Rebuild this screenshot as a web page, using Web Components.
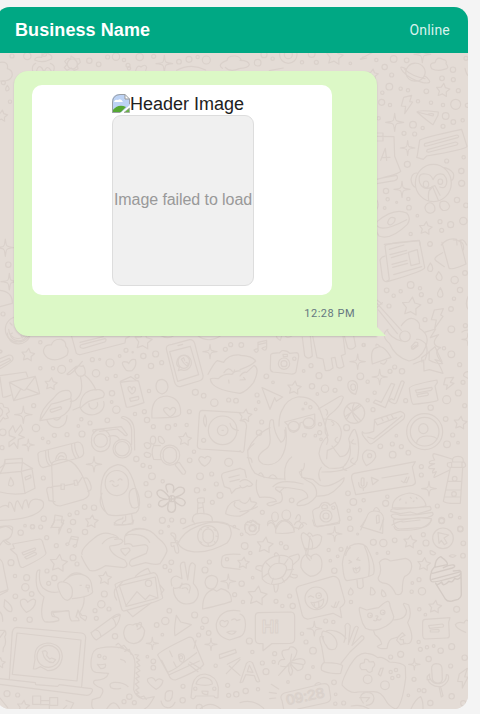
<!DOCTYPE html>
<html lang="en">
<head>
<meta charset="utf-8">
<title>Business chat preview</title>
<style>
html,body{margin:0;height:100%;overflow:hidden;background:#f4f4f4}
body{font-family:"Liberation Sans",Arial,sans-serif}
</style>
</head>
<body>
<chat-preview>
  <chat-header slot="header" name="Business Name" status="Online"></chat-header>
  <message-bubble time="12:28 PM">
    <media-header label="Header Image"><failed-image>Image failed to load</failed-image></media-header>
  </message-bubble>
</chat-preview>
<script>
const define = (tag, html, setup) => customElements.define(tag, class extends HTMLElement {
  constructor() {
    super();
    this.attachShadow({mode: 'open'}).innerHTML = html;
  }
  connectedCallback() { if (setup) setup(this, this.shadowRoot); }
});

define('chat-header', `<style>
:host{display:flex;box-sizing:border-box;height:46px;padding:0 18px 0 19px;align-items:center;justify-content:space-between;background:#00a884;color:#fff}
b{font-size:18px;line-height:22px;letter-spacing:.08px}
span{font:14px/20px Roboto,sans-serif;letter-spacing:.2px;color:#d9f2ed}
</style><b></b><span></span>`, (el, root) => {
  root.querySelector('b').textContent = el.getAttribute('name');
  root.querySelector('span').textContent = el.getAttribute('status');
});

define('failed-image', `<style>
:host{display:flex;box-sizing:border-box;width:142px;height:171px;padding-bottom:2px;align-items:center;justify-content:center;border:1px solid #ddd;border-radius:9px;background:#f0f0f0;color:#999;font-size:16px;line-height:18px;letter-spacing:-.08px;white-space:nowrap}
</style><slot></slot>`);

define('media-header', `<style>
:host{display:flex;box-sizing:border-box;width:300px;height:210px;padding:9px 0 0 2px;flex-direction:column;align-items:center;border-radius:10px;background:#fff}
.alt{display:flex;width:142px;height:21px;color:#212121;font-size:18px;line-height:21px;white-space:nowrap}
svg{flex:none;width:18px;height:19px}
</style><div class="alt"><svg viewBox="0 0 18 19"><defs><clipPath id="c"><path d="M8 0H13L18 5V11L9 18.500H0V8Q0 0 8 0Z"/></clipPath></defs>
<g clip-path="url(#c)"><rect width="18" height="19" fill="#bdd3f5"/><path d="M2 8Q3 5 6 6Q9 4 11 8Z" fill="#fff"/><path d="M0 17Q6 9 14 13L8 19H0Z" fill="#56a834"/><path d="M13 0V5H18" fill="#fff" stroke="#999"/></g>
<path d="M.5 18V8Q1 1 8 .5H13L17.500 5V10M.5 18.500H8" fill="none" stroke="#9b9fa4"/><path d="M12 18.500H17.500V14Z" fill="#67b346" stroke="#a4a6a5" stroke-width=".8"/></svg><span></span></div><slot></slot>`,
(el, root) => { root.querySelector('span').textContent = el.getAttribute('label'); });

define('message-bubble', `<style>
:host{display:flex;position:relative;box-sizing:border-box;width:363px;height:265px;padding:14px 22px 0 18px;flex-direction:column;border-radius:14px 14px 0 14px;background:#dcf8c6;box-shadow:0 1px 2px rgba(0,0,0,.14)}
:host::after{content:"";position:absolute;right:-9px;bottom:0;width:9px;height:9px;background:#dcf8c6;clip-path:polygon(0 0,100% 100%,0 100%)}
time{align-self:flex-end;margin-top:11px;font:11px/15px Roboto,sans-serif;letter-spacing:.5px;color:#667781}
</style><slot></slot><time></time>`, (el, root) => { root.querySelector('time').textContent = el.getAttribute('time'); });

/* Doodle tiles: each has an origin and is drawn at three units per pixel.
   dots: x y r; stars and sparks: x y size */
const tiles = [
{at:[0,0],
 dots:'82 168 11 133 162 7 268 182 8 296 193 7 323 171 6 348 170 11 372 180 5 384 196 6 419 171 11 387 205 5 461 169 6 537 185 7 567 178 9 593 171 5 619 180 12 36 168 6 10 248 6 30 305 5',
 stars:'5 348 18', sparks:'493 191 25',
 paths:`M0 187Q27 184 22 206Q40 211 36 229Q29 246 0 243M22 256Q34 270 20 273Q13 269 22 256M104 180Q105 169 125 172Q126 160 140 160M104 180Q128 191 154 177Q160 167 143 160M107 190Q94 197 98 213M151 190Q167 195 161 213M110 212Q114 194 125 203L130 212M134 212Q142 193 153 212M213 168L226 177L238 176L241 187L232 195L234 207L222 211L214 204L201 211L193 203L201 193L194 184L203 175L212 178ZM202 192A15 15 0 1 0 232 192A15 15 0 1 0 202 192M407 212Q412 193 423 201Q436 190 440 202L437 212M530 211Q573 188 617 210M667 205Q650 193 681 181Q682 167 706 168Q720 170 724 181M676 202Q690 218 718 206`},
{at:[240,0],
 dots:'53 188 10 98 176 5 145 164 26 145 164 12 186 187 5 229 187 6 331 190 4 215 162 10 72 164 9',
 stars:'284 170 26',
 paths:`M0 181Q26 181 28 194Q25 204 0 205M88 212L130 204M361 177L398 157M369 171L362 178L380 174`},
{at:[360,45],
 dots:'49 45 5 101 42 10 140 46 7 74 66 8 95 90 6 88 125 10 67 143 5 122 131 5 144 136 5 199 139 7 246 100 7 279 74 8 280 104 6 295 137 6 318 40 6 65 172 9 90 180 5 174 169 5 213 173 5 249 180 5 287 178 15 257 213 10 280 231 7 308 226 5 322 181 6 159 239 10 188 249 5 249 244 6 132 265 6 164 267 6 142 358 9 260 348 6 311 337 5 304 378 8 305 415 9 78 438 8 83 463 5 145 462 5 147 488 7 110 472 3 74 489 4 291 465 8 318 481 7 172 512 4 240 530 6 272 539 9 310 528 11 245 556 6 152 567 5 56 220 5',
 stars:'249 136 21 197 550 20 37 90 18', sparks:'187 28 25 104 232 27 143 309 22 126 433 24',
 paths:`M138 87A29 27 0 1 1 194 90A29 27 0 0 1 138 87M139 72Q112 58 129 80Q150 104 189 113Q215 117 207 105Q201 96 193 92M134 73Q155 93 195 101M215 71Q205 54 225 53Q230 32 248 43Q262 45 258 56Q271 71 252 73Q233 80 215 71M131 157L155 151L149 170L158 171L134 206L137 184L124 183ZM171 201Q174 193 235 201L234 211L219 239Q203 229 171 201L219 213Q226 203 205 207M172 331L179 286Q182 279 305 253L321 304Q319 313 200 333L190 343L170 337ZM194 296L291 270Q300 273 293 278L201 303Q190 305 194 296M202 314L287 291Q298 294 290 300L208 321Q196 322 202 314M166 414A54 56 0 1 1 274 414A54 56 0 1 1 166 414M171 384Q156 383 153 403Q155 423 167 427M249 367Q270 370 280 385Q284 401 273 408M214 427Q190 437 179 413Q172 384 195 387Q213 386 219 404Q230 381 251 389Q264 402 259 418Q255 432 239 426M190 418A8 10 0 1 1 206 418A8 10 0 1 1 190 418M234 410A7 8 0 1 1 248 410A7 8 0 1 1 234 410M206 467Q201 425 225 422L240 451M207 438L218 425L235 466M195 486A15 18 0 1 1 224 497A16 18 0 0 1 195 486M241 471Q261 462 269 483Q266 499 248 496Q235 487 241 471M51 530Q102 487 140 504Q155 519 142 538Q92 587 57 573Q45 560 51 530M51 542Q66 563 140 524M83 532Q89 510 105 520Q107 533 91 540Q83 539 83 532M51 274L102 275L104 334L122 379Q119 386 51 403M51 264H69V288H51M62 346L76 310L80 346M66 338L90 337M51 402L110 391Q117 402 104 407L51 416M51 466Q58 480 51 492M315 70Q320 94 329 93M73 598L178 587Q181 594 179 600M244 600Q263 577 290 583L291 600M297 590Q309 575 320 600`},
{at:[240,240],
 dots:'570 12 7 440 151 7 461 167 5 482 154 5 512 135 10 540 145 5 544 164 6 447 198 6 570 183 7 644 120 11 675 99 7 660 150 8 642 176 5 633 207 7 555 239 6 634 268 10 676 257 6 634 343 10 612 325 5 4 315 7 371 315 4',
 stars:'514 200 29', sparks:'684 298 18',
 paths:`M435 18Q438 9 538 1L554 82Q557 92 445 124Q430 128 427 112L420 60Q424 50 435 48M435 18L447 112Q450 122 440 123M448 28L492 15M450 44L500 31M454 53L501 39M456 73L501 61M458 82L503 70M461 104L545 80M505 37L532 29L539 70L513 77ZM606 7L627 84Q634 92 678 72L660 0M608 38Q576 54 588 62L613 80M640 0Q676 -1 670 30M571 69Q583 83 575 94Q560 96 564 81ZM596 95Q612 112 603 121Q590 124 588 109ZM601 143Q614 166 605 171Q591 174 593 158ZM583 210L610 206L602 225L609 229L584 265L589 240L574 239ZM411 190L484 271M415 210L472 281M411 180L426 192M408 205L427 188M479 289A16 16 0 1 0 511 289A16 16 0 1 0 479 289M484 257Q509 222 532 243Q541 251 538 265Q572 285 557 321Q544 356 507 363Q464 349 449 311Q419 285 444 268M514 319L526 306Q536 306 533 314L520 327Q513 329 514 319M553 277L587 267L571 293L596 284Q567 315 602 323Q576 333 608 371Q588 372 567 360L568 336L545 353L546 366M684 170Q674 193 684 207M0 1H1`},
{at:[0,240],dots:'25 74 8 9 222 6 2 334 4',sparks:'16 23 26 28 125 25',
 paths:`M0 151Q38 155 37 190L0 200M16 268A37 37 0 1 0 92 268A37 37 0 1 0 16 268M26 268A28 28 0 1 0 82 268M53 270L44 252M53 270L75 275M30 249L36 255M31 283L37 279M67 294L63 287`},
{at:[0,330],
 dots:'121 37 5 1 65 4 121 115 5 159 115 5 185 118 12 212 92 4 277 89 6 299 88 3 330 99 12 288 130 11 378 61 6 359 78 4 398 67 2 430 78 8 467 72 9 453 108 8 485 98 6 321 146 5 347 138 5 411 139 6 336 190 8 335 216 4 349 239 11 447 183 5 433 245 6 405 252 5 441 270 8 460 290 6 504 292 8 526 285 4 560 285 5 568 245 6 586 187 9 611 197 7 643 218 11 686 210 6 708 212 7 676 58 6 692 44 6 101 227 6 108 294 11 8 307 10 6 353 6 128 325 4 145 337 5 163 316 6 201 314 6 235 288 4 244 268 5 270 279 6 246 312 9 322 271 7 130 444 6 409 387 8 429 406 6 450 411 5 456 439 10 438 461 6 445 493 10 448 527 5 488 454 5 569 391 7 582 365 5 600 439 10 635 432 6 686 397 12 649 462 6 591 481 8 614 479 3 660 496 9 637 517 6 131 566 8 209 554 5 231 548 6 254 531 7 282 533 8 433 566 5 487 571 9 515 570 6 549 573 8 75 587 4 97 590 6 122 591 6 506 589 3',
 stars:'84 75 20 153 162 19 430 33 27 555 328 20 275 575 20', sparks:'630 65 21 70 254 26 85 345 18 282 403 23',
 paths:`M22 9A34 31 0 0 0 90 12M30 12A26 24 0 0 0 81 14M0 86L27 75Q40 75 39 88Q37 96 0 116M0 97L28 85L32 91L0 108M142 83Q125 68 133 54Q137 43 154 45Q160 26 184 28Q199 34 197 48Q209 58 201 76Q168 99 142 83M215 19L229 70Q235 76 248 72L375 39L377 25L388 20M240 37L310 20M242 45Q236 54 250 55L314 36Q322 29 315 26L245 44M478 14Q504 31 523 16M591 15Q625 43 664 16M379 121Q359 96 373 95Q384 95 386 101Q393 84 406 89Q412 107 396 122Q388 124 379 121M361 154L393 140L407 150L416 153M361 157L379 231Q382 235 432 218L416 154Q413 150 361 157M384 172Q391 165 396 179Q398 165 406 174Q409 185 396 192Q383 183 384 172M389 205L415 199Q419 209 412 210L392 214ZM468 168Q469 148 486 148Q503 151 504 171Q502 188 486 192Q468 187 468 168M456 264Q451 199 501 198Q543 204 542 250Q542 259 517 262Q479 264 456 264M510 261Q486 242 492 235Q505 229 510 240Q520 225 527 238Q528 250 510 261M500 61Q495 45 516 43L569 29Q579 28 584 40L609 136Q611 149 597 153L543 169Q528 173 523 154ZM509 65L571 49L596 134L533 154ZM534 47L548 43M530 98A22 23 0 1 1 543 119L535 122L538 112Q530 108 530 98M535 98A16 17 0 1 0 568 97A17 17 0 1 0 535 98M544 88Q550 101 561 108L566 101L558 97M544 88L551 83L554 92M624 133Q645 94 652 92L671 97Q686 72 720 75M631 147Q635 143 655 146Q671 130 695 133Q706 120 720 123M631 147Q633 179 720 190M672 128Q685 107 697 124M686 150L687 159M698 132L704 120M0 137L78 126L83 140M28 157L106 139L119 191L41 212ZM30 158L69 180Q76 183 80 174L106 140M41 212L63 176M117 191L79 176M0 142L8 200Q9 205 33 195M120 272Q120 239 161 204Q180 176 207 182Q217 188 212 204M120 272L179 262Q220 242 213 205Q178 217 154 222L120 272M151 239L182 230Q187 234 183 237L155 247Q149 245 151 239M140 269Q151 297 179 292Q200 286 201 257M160 265Q171 277 182 262M228 109L201 132Q208 140 230 114L247 94M228 110Q219 119 233 136Q244 144 255 132Q258 118 249 106M224 113Q232 105 247 109M241 138Q252 184 234 202Q223 216 211 214M253 134Q277 153 288 181M219 240L240 231Q243 174 299 179Q320 187 309 202L273 212Q261 214 241 235M240 231A36 31 0 0 0 311 215M267 221A13 14 0 1 0 292 218M0 220Q10 218 11 231L24 234L28 245L19 252L25 264L15 267L10 262L0 276M0 233Q16 245 0 260M27 304L39 287L46 307L62 285L68 300L56 315L73 322L55 328L53 355L42 338L27 350L27 337L46 323L28 317ZM275 331A28 28 0 1 1 330 332A28 28 0 1 1 275 331M282 331A20 20 0 1 1 322 332A20 20 0 1 1 282 331M339 356A28 28 0 1 1 395 356A28 28 0 1 1 339 356M345 356A21 21 0 1 1 388 356A21 21 0 1 1 345 356M326 319Q352 311 359 330M282 309Q273 298 285 299L364 290L382 314Q378 322 369 310L352 297L299 304M364 264Q366 256 379 262Q401 271 403 300L404 360M366 264Q394 275 395 300V343M114 376Q111 366 129 363L234 336Q250 337 251 370Q248 382 234 384L129 413Q115 411 114 376M137 362Q136 398 150 407M145 360Q144 395 158 404M215 342Q214 365 228 386M224 339Q223 362 237 383M155 408Q151 397 171 391Q211 378 236 418Q251 438 267 489Q269 499 251 508L180 528Q164 526 160 518ZM167 388Q172 364 193 369Q202 379 198 386M174 386Q180 372 192 381M156 470L185 467M194 467L224 461M234 460L246 443M183 462H193V478H183ZM222 452L230 450L234 465L224 466ZM155 473Q135 467 142 489L147 512L165 515M253 445Q265 438 273 468Q276 482 264 484M0 413L12 404L15 389L67 385V398L16 401M15 388V401L0 431M67 397L96 415L105 475L75 490L64 424L0 430M67 399L64 424L98 415M0 486Q35 496 76 490M32 442Q24 463 26 466Q37 472 41 462Q40 453 32 442M75 442L92 435L93 443L77 450ZM0 532Q19 520 26 532Q24 509 34 520L44 544Q46 510 54 513L67 537Q70 507 80 510L86 533Q88 503 114 508Q136 510 129 532Q107 569 0 571M303 495Q299 415 353 404Q400 402 416 527Q419 540 408 548Q351 562 325 554Q312 548 303 495M316 456A34 34 0 1 1 385 456A35 35 0 1 1 316 456M330 455Q336 448 342 456M354 451Q360 443 366 450M337 463Q345 475 355 465M306 490Q292 520 314 543M388 490Q391 474 407 475Q421 499 418 527Q407 538 396 532Q385 514 388 490M343 584Q341 572 368 566L369 561M368 583Q364 577 377 571V558M395 551L398 577Q392 586 343 585M451 330A8 12 0 1 1 467 331A8 12 0 1 1 451 330M476 320Q485 316 494 335Q490 346 479 337Q473 329 476 320M433 341Q442 333 453 344Q451 357 441 356Q431 350 433 341M433 371Q439 363 453 373Q452 384 440 382Q431 378 433 371M481 376A29 30 0 1 1 539 375A29 30 0 1 1 481 376M490 376A20 20 0 1 1 529 375A20 20 0 1 1 490 376M481 347L461 346Q452 367 461 388L484 389M526 406Q526 398 538 397L557 425Q556 435 547 432ZM720 248L607 241Q599 242 598 250L592 347Q592 356 603 357L720 365M625 301A43 43 0 0 1 711 301A43 43 0 1 1 625 301M652 301A16 16 0 1 1 684 301A16 16 0 1 1 652 301M615 255Q623 271 617 290Q605 274 615 255M605 331A6 6 0 1 0 617 331A6 6 0 1 0 605 331M666 301H670M690 280Q693 298 715 301M596 389Q600 373 615 385Q621 374 633 384Q631 400 614 409Q601 402 596 389M720 415L670 429Q662 433 666 445L673 470L690 476L695 490L707 477L720 473M687 443L718 435M690 455L718 448M592 509Q591 502 613 504V517Q602 521 593 517ZM594 518L592 550M608 518L612 550M594 535L609 531M577 575Q575 550 599 550Q639 549 637 572M549 596Q631 552 718 599M720 510Q683 511 677 551Q691 559 720 558M705 517Q696 530 720 538M0 590Q23 584 35 600M165 555L187 559L184 578L191 580L176 600M153 593L162 577L165 555M397 599Q420 591 441 600`,
 bold:`M503 486Q490 461 509 462Q526 462 519 487Q534 465 550 474Q564 490 523 503Q554 503 556 518Q550 539 524 514Q532 545 515 547Q496 546 507 515Q486 539 476 525Q473 508 502 508Q469 504 471 486Q482 468 507 501M507 506A9 9 0 1 0 525 506A9 9 0 1 0 507 506M514 498V515M506 507H524`},
{at:[240,330],
 dots:'213 107 6 191 123 4 237 137 9 299 146 6 216 169 8 232 192 4 255 176 11 285 181 6 79 139 7 99 157 4 51 195 6 56 216 4 47 238 4 65 276 6 57 308 8 371 45 5 361 139 10 383 155 5 383 211 5 404 188 5 399 239 6 320 293 9 464 111 6 450 124 6 486 124 8 497 212 6 572 233 8 617 267 7 620 209 12 655 189 9 674 227 6 669 157 6 659 104 6 638 315 6 621 343 10 654 338 4 457 342 6 484 350 6 469 317 4 421 349 7 458 374 10 505 368 7 544 410 6 544 435 6 592 528 6 605 571 9 632 557 6 659 563 4 437 520 9 442 500 5 324 490 7 340 516 10 371 511 5 326 542 5 360 541 5 329 565 6 155 511 7 67 547 6 197 220 4 211 232 5 189 237 3 240 283 5 239 308 6 226 317 4 243 328 4 661 596 8',
 stars:'163 174 21 16 257 20 661 279 20', sparks:'353 95 23 419 141 23 567 476 22',
 paths:`M54 58V37L80 31V52M54 44L80 38M42 60Q55 53 55 61Q50 74 42 60M66 55Q79 46 80 54Q76 67 66 55M109 18Q110 26 121 31L125 18M136 18Q142 26 155 18M92 76Q91 68 118 69L126 62Q142 60 149 70L170 68Q176 69 176 80L168 125Q166 133 153 132L99 126Q90 124 91 113ZM115 101A17 17 0 1 0 149 101A17 17 0 1 0 115 101M123 101A9 9 0 1 0 141 101A9 9 0 1 0 123 101M129 73H142V80H130ZM158 86A5 5 0 1 0 168 86A5 5 0 1 0 158 86M187 22L194 77Q203 91 217 78L211 18M218 18L231 83L249 87L256 121Q267 125 279 114L274 84L285 82L291 111Q300 119 312 109L304 77L316 72L309 18M313 18L323 54Q336 63 347 49L341 18M0 76Q37 77 47 93Q35 107 0 119M0 138Q10 124 20 127L42 106Q61 115 41 157Q20 185 0 190M0 150L16 149L11 142M397 102Q389 56 410 53Q429 41 453 82ZM408 48Q407 36 420 49M422 99Q434 108 440 91M441 0Q451 24 484 33M66 173L128 201L109 214L104 203L90 238ZM347 193Q329 190 324 171Q321 151 339 152Q355 156 352 176ZM333 172A7 7 0 1 0 346 171A7 7 0 1 0 333 172M400 218L406 210L424 217L454 160L464 163L436 233ZM447 213L453 206L462 210L483 155Q487 149 493 157L470 217Q466 226 447 213M508 175Q509 165 591 150L592 158L585 168L594 210Q592 216 520 223Q514 222 508 175M526 181L575 172Q579 177 573 181L530 189ZM531 194L562 188Q568 192 563 196L534 201ZM616 144L641 142L631 157L642 160L619 178L622 165L611 164ZM555 90Q567 61 556 40Q541 26 530 28M526 46Q507 57 521 57L534 47M520 102L551 90L552 123L568 119L609 130Q597 97 585 89L606 95L585 50L567 65M684 125Q669 127 671 138L684 145M684 0Q673 0 666 6M312 249A31 31 0 1 1 374 249A31 31 0 1 1 312 249M320 228L363 273M317 259L363 227M343 218Q327 252 355 277M359 223Q336 239 319 269M367 305Q372 315 401 304L404 269L481 244Q500 249 491 267L400 338Q390 347 382 333Q363 313 367 305M383 321L401 327L486 258M403 270L412 285L470 263M424 263L429 272M440 259L445 268M454 255L459 263M379 407Q355 374 381 360Q409 359 407 381Q399 398 379 407M383 377A6 6 0 1 0 395 377A6 6 0 1 0 383 377M500 305A54 54 0 1 1 608 305A54 54 0 1 1 500 305M511 305A43 43 0 1 1 597 305A43 43 0 1 1 511 305M536 296A14 15 0 1 0 564 296A14 15 0 1 0 536 296M530 338Q535 317 562 318Q588 319 591 328M335 447Q333 432 343 430L526 395L517 411L526 454Q528 462 517 466L347 494ZM364 449Q363 441 372 445V466Q361 475 364 449M356 458Q356 475 370 474Q382 469 381 456M370 475V481M394 442L415 451L398 464ZM426 444L504 431M484 453L492 458L500 442M494 456L500 458L507 441M636 387Q605 377 582 371Q574 374 584 390Q562 393 570 401H584Q559 410 569 416H584Q576 422 578 429L589 425Q578 445 584 442L628 421M638 395Q635 379 654 379Q673 379 669 397M638 396L623 399Q619 410 630 412H672Q682 407 672 396ZM635 399V412M666 398V412M631 413L610 514Q619 522 661 520L668 413M624 454H666M618 480H663M613 501H662M637 446A7 7 0 1 0 651 446A7 7 0 1 0 637 446M635 492A7 7 0 1 0 649 492A7 7 0 1 0 635 492M117 288Q117 254 127 239Q140 208 172 201Q220 198 239 238Q250 266 264 317Q240 338 237 371Q243 404 266 414Q314 420 320 398Q339 372 326 326Q342 287 347 303Q362 340 352 389Q332 427 246 426M137 293Q145 350 123 384Q102 411 69 402Q37 383 79 356Q95 346 89 310Q85 260 100 271Q102 312 123 337Q140 328 134 300M90 293Q44 314 23 361Q23 404 45 430Q72 448 133 447M134 276L224 252L225 285Q216 301 195 293L188 276L180 279Q182 302 161 307Q145 306 143 285ZM145 290A16 14 0 1 1 177 287A16 14 0 1 1 145 290M190 278A16 14 0 1 1 222 277A16 14 0 1 1 190 278M188 320Q185 307 200 312L195 321ZM235 237L296 201Q309 194 310 203Q301 232 268 255Q253 269 256 309Q269 326 260 343M250 267Q299 266 304 306Q304 348 262 361L260 386M276 348Q290 368 300 380Q330 379 330 335M135 450Q129 399 155 381M193 400Q195 420 178 426Q181 444 215 459Q235 477 228 500Q206 529 174 527Q161 520 203 503Q205 489 186 480Q143 471 110 471Q99 478 123 487Q135 518 111 520Q91 531 85 526Q70 519 109 514Q107 499 59 502Q45 482 50 450M184 418L185 442L218 448L238 465Q265 477 312 443Q315 455 290 476Q270 500 229 498M99 470Q121 444 189 462M244 412Q230 428 241 452M42 341Q31 348 25 360M22 383Q36 381 36 397M56 434Q64 420 72 443M87 442Q99 425 111 445M118 487Q136 468 137 474M257 238Q267 246 260 255M275 274Q288 284 277 286M292 322Q277 330 294 339M316 402Q301 421 320 421M339 384Q322 395 345 403M340 329Q327 342 347 342M0 271L13 274Q23 281 18 301L12 361Q8 373 0 362M0 415L14 420L19 442M0 455Q17 440 38 463Q31 473 22 467Q3 480 0 467M0 514Q20 530 30 503L33 515Q57 517 47 523Q32 544 0 558M0 545Q28 544 52 530M218 546Q216 538 237 532L245 520Q262 512 270 526L285 517L291 530L300 572Q301 578 231 591Q224 589 218 546M240 558A18 18 0 1 0 276 558A18 18 0 1 0 240 558M249 558A9 9 0 1 0 267 558A9 9 0 1 0 249 558M245 531Q248 521 261 526L263 534L247 537ZM275 533A5 5 0 1 0 285 533A5 5 0 1 0 275 533M22 574L33 579L38 570L49 581L59 583L56 597M14 598L15 583L25 585M28 595A9 9 0 1 1 46 595A9 9 0 1 1 28 595M95 560A10 14 0 1 1 115 560A10 14 0 1 1 95 560M126 555A13 15 0 1 1 152 555A13 15 0 1 1 126 555M167 567Q174 546 181 559Q183 572 174 575M83 583Q98 568 107 596M108 597Q130 548 163 597M176 599Q184 568 200 583M362 600L380 562Q384 544 403 543Q429 542 431 567L420 600M401 541Q408 523 419 543M409 562Q409 554 417 556L418 577L410 580ZM457 533Q457 498 508 489Q551 494 558 526Q551 535 457 533M452 544Q452 533 472 538L570 529Q578 540 566 542L531 552L511 546L481 551ZM454 556Q460 548 481 556L532 554L577 547Q585 557 563 562L475 568Q453 566 454 556M460 570Q477 564 487 570L535 563L574 566Q573 588 546 593L479 597Q462 596 460 570M479 510L482 507M498 516V520M511 502L514 505M520 515L522 513M529 503L531 506`},
{at:[0,520],
 dots:'62 38 8 140 53 6 169 77 6 208 32 6 255 36 8 219 6 8 98 20 6 33 128 9 141 153 6 163 174 8 146 190 6 45 168 5 80 173 9 76 202 11 46 229 7 95 222 7 45 298 5 89 299 8 219 113 9 231 132 6 313 222 9 304 253 11 285 272 6 327 267 6 289 295 6 345 349 8 470 315 7 496 303 11 508 272 7 487 344 4 584 285 9 615 301 10 607 323 5 626 339 7 596 345 6 495 140 6 514 127 7 510 152 5 628 126 6 615 150 9 704 224 6 483 36 6 703 20 4 442 410 4 460 424 7 460 443 7 388 530 8 403 548 6 372 545 6 549 499 6 548 541 8 647 437 5 683 496 6 686 526 6 709 523 8 598 562 9 21 521 9 53 525 6',
 stars:'176 130 27 315 175 20 0 429 16 70 560 19', sparks:'457 370 18 633 373 18 685 184 22',
 paths:`M0 24Q31 12 38 22Q39 58 14 60Q6 64 0 75M15 60L32 72Q23 79 10 61M171 0H192L176 42L178 22H154L165 0M343 8Q347 17 398 12L401 0M31 88L43 85L38 72L119 57Q127 58 129 70L138 99Q139 109 70 142Q61 145 58 132L50 104ZM66 98L104 84Q109 86 105 91L70 105ZM74 112L104 97Q114 101 107 104L80 117ZM206 71L214 49L235 52L229 76M211 56L234 60M197 72Q205 65 207 73Q200 81 197 72M219 78Q227 70 230 78Q224 86 219 78M246 103Q240 88 283 54Q307 33 333 42Q350 46 355 54L341 51Q320 54 307 71M344 58Q365 53 369 64Q363 76 330 78Q326 84 338 99Q348 111 374 120Q389 139 371 143L316 137Q285 157 269 151Q257 137 244 108M374 64Q370 41 394 32Q444 14 473 53Q501 74 501 93Q496 108 480 131Q467 136 437 128L395 139Q382 132 394 119L439 100Q450 76 435 74L398 79Q392 66 374 73ZM378 47Q383 41 410 44Q436 46 449 67M376 107Q350 83 374 86Q390 80 390 92ZM521 50Q509 44 514 39Q532 37 526 61Q543 65 530 69Q539 90 535 98Q525 105 522 77Q512 85 513 68L528 68ZM534 71Q549 35 592 19Q647 -3 684 12Q705 40 681 69Q621 103 573 94Q546 90 534 71M593 48A31 31 0 1 1 655 48A31 31 0 1 1 593 48M609 48A16 17 0 1 1 640 48A16 17 0 1 1 609 48M599 27L604 29M621 22L626 22M642 28L646 32M647 48L652 49M643 65L647 69M624 72L625 76M601 65L605 68M578 0L584 12M720 103Q666 99 666 114Q661 138 671 142L720 148M676 118A5 5 0 1 0 686 118A5 5 0 1 0 676 118M0 118Q9 124 11 145L24 209L0 217M0 225L23 213M14 239Q43 260 34 275Q22 276 12 260ZM79 277Q57 257 62 241Q77 232 83 247Q101 231 107 242Q106 266 79 277M0 276Q9 285 8 304M120 150Q114 189 129 204Q150 221 175 216M120 150Q108 148 109 172Q105 214 132 231Q117 289 134 305Q151 309 176 302Q180 291 157 289Q151 276 157 274L207 273Q208 297 215 303L237 302Q235 291 228 291L234 270M205 272L158 278L165 291M234 270L242 292L256 302Q267 284 246 287L239 277Q255 254 252 229M176 208Q167 183 189 186Q213 188 217 210Q219 238 202 241Q187 240 176 208M190 185Q213 158 245 163Q270 170 274 190L278 216Q272 230 217 236M204 171Q224 150 251 165M240 196H244M259 195L268 196L268 204L258 202ZM263 204L265 215M345 194Q346 187 461 158Q470 159 474 175L488 233Q490 241 376 272Q367 275 365 267ZM358 197L466 171L474 234L379 259ZM369 184L351 203M406 169Q421 153 444 145L451 159M345 207Q339 224 350 240M380 271L398 290L454 248M377 258L411 215L436 239L449 225L473 234M436 190A9 9 0 1 0 455 190A9 9 0 1 0 436 190M479 194L492 210L483 222M273 338L343 287Q356 279 361 285Q357 308 345 321L289 360Q278 354 273 338M287 330Q300 331 303 349M335 293Q345 299 347 315M341 293L360 285M371 340Q374 307 399 315Q421 302 434 332Q431 368 401 371Q374 369 371 340M410 312Q407 315 412 319M411 321Q416 302 424 309Q427 325 412 328M516 198Q507 170 530 168L546 176L541 138Q542 124 554 127L563 180L568 141Q575 119 586 136L580 190Q610 223 580 248Q545 261 527 232Q518 217 521 202M524 205Q545 205 546 189M540 205Q540 195 548 193Q570 188 571 203L567 219M546 205Q562 200 563 209M615 187Q616 168 635 166Q654 168 653 184Q649 207 633 207Q617 205 615 187M608 267Q607 218 640 208L650 214L663 206Q697 213 694 244Q679 251 608 267M529 286L542 306L574 314L525 347Q521 330 529 286M720 273Q662 263 649 311Q646 350 689 360L720 350M660 306Q665 297 674 305Q685 298 685 307Q680 321 671 321Q658 318 660 306M695 300Q706 292 710 302L720 299M681 337Q691 331 708 334Q698 350 681 337M0 352L15 332Q21 341 14 350Q21 371 10 384L9 395M0 331H13M36 347Q36 323 50 322L244 339Q257 341 257 353L245 499M36 347L28 478M51 339L243 360L231 483L37 463ZM0 476L106 488L107 494L173 499L178 494L268 505Q279 504 277 513Q272 526 260 526L0 493M107 447L100 447L105 418Q99 375 142 369Q184 371 187 409Q183 450 144 452L122 440ZM111 409A34 33 0 1 1 179 409A34 33 0 1 1 111 409M127 394Q134 429 160 428L167 419L155 414L149 417L140 407L142 398L136 392ZM348 375L355 370L370 384M355 384L372 376L386 393M374 394L388 388L393 403M274 417Q277 387 300 384Q350 375 382 391Q407 402 405 439L401 509Q407 532 429 537L463 530Q446 562 433 567M274 417Q269 455 288 457Q331 460 325 461Q320 480 285 481Q276 486 285 494Q292 501 304 504Q315 512 300 532L277 539Q272 559 280 567M293 408A5 5 0 1 0 303 408A5 5 0 1 0 293 408M309 413A5 5 0 1 0 319 413A5 5 0 1 0 309 413M292 433Q302 436 316 432Q320 446 302 446ZM362 418Q377 422 376 427M384 500Q371 486 342 487Q324 489 333 503Q344 509 362 505M405 404L416 405L409 414L419 421L410 426L420 437L409 442L420 452L408 459L418 470L407 475L417 486L406 492L417 504L407 510L417 519L408 521L421 532L431 528L439 538M320 567Q342 530 359 567M468 508Q437 486 443 477Q458 466 467 483Q476 471 489 482Q486 500 468 508M496 521Q500 509 517 513Q520 532 510 542Q498 546 495 537ZM483 543Q487 562 502 563Q517 565 525 547M473 405Q478 394 566 352Q574 349 579 356L611 433Q602 449 526 480Q512 480 506 464ZM485 421L503 457Q531 446 549 428L540 423Q534 410 536 404Q553 396 554 415L549 428L590 398M506 465L598 423M588 361L582 385M509 393L517 410M521 426L529 442M565 432L594 455M569 426L603 447M538 412A5 5 0 1 0 548 412A5 5 0 1 0 538 412M577 495Q585 462 615 462Q649 467 655 502L654 533Q645 536 642 528H587Q582 542 573 533ZM588 492Q592 474 612 472Q638 476 637 492Q618 500 588 492M581 506A5 5 0 1 0 591 506A5 5 0 1 0 581 506M638 506A5 5 0 1 0 648 506A5 5 0 1 0 638 506M606 513Q605 524 623 524L624 514ZM658 404L706 388L709 398L659 416ZM682 433L720 413M688 438L720 466M679 461L720 419M600 567Q631 540 662 567M98 528H122V553H98ZM124 542H147M149 533H173V556H149ZM122 554H148V566M0 534L23 563M198 541L221 549L212 567M190 567L200 557`},
{at:[240,520],
 dots:'14 78 10 31 99 5 5 43 4 123 70 5 138 82 7 38 173 4 5 191 8 9 246 5 108 244 6 127 258 5 149 228 6 158 258 8 186 341 5 28 363 9 37 396 5 104 401 6 67 429 6 101 426 5 78 455 9 144 486 4 204 471 8 219 441 4 198 366 6 219 392 10 257 303 6 280 306 5 282 487 7 17 513 8 54 508 5 266 90 5 303 88 6 271 122 4 283 152 8 293 109 4 333 246 5 331 26 8 353 42 3 400 67 9 430 69 11 464 61 7 411 100 3 444 98 5 550 44 6 558 69 9 661 28 8 670 70 7 669 107 7 539 97 6 537 179 6 517 189 4 515 215 5 546 214 11 538 268 5 650 268 9 556 284 4 536 366 5 541 388 6 561 382 5 581 378 4 602 392 8 635 380 9 674 413 8 566 417 8 632 438 6 452 411 6 482 403 9 452 456 5 468 450 5 475 468 5 457 474 5 522 478 6 537 511 5 552 512 6 505 526 4 571 549 8 635 529 8 670 550 8 287 523 4 286 551 5 311 549 6 605 3 8',
 stars:'75 76 25 52 228 30 510 66 20 552 133 20 585 261 20 10 129 18', sparks:'284 42 22 223 326 22 523 433 17',
 paths:`M14 22L17 10L31 2L46 4L58 16L57 31L46 43L29 45L17 36ZM27 24A11 11 0 1 0 49 24A11 11 0 1 0 27 24M83 17Q80 0 97 2L107 20M107 27Q111 0 136 0Q159 2 163 36Q134 43 107 39ZM163 14Q174 -7 190 17Q183 30 164 22M218 0L223 17Q226 22 298 10V0M362 20L367 14L376 0M362 20L428 40L429 0M456 15Q481 0 489 6L540 0M462 20Q466 35 485 30Q553 35 575 0M197 93Q174 40 191 38L202 45Q209 31 218 49Q235 38 245 50Q245 79 220 86Q202 90 193 83M202 86Q190 104 210 121M210 49Q206 77 203 103M204 47Q223 65 216 86M183 142Q180 114 198 103Q214 107 214 116Q211 104 229 102Q253 112 243 151Q232 168 211 169Q192 162 183 142M66 147Q68 122 103 109Q141 99 157 122Q164 168 125 189Q86 202 67 177ZM85 154Q94 127 121 130Q143 132 139 150Q133 175 110 177Q87 180 85 154M105 110L103 103Q110 90 119 112M149 110L174 102Q183 110 174 121L157 136M64 154L48 147Q45 135 62 137L69 139M157 163L171 165Q175 174 161 174L149 169M101 193L104 214Q110 222 114 205L115 192M79 129L92 142M118 109L117 129M144 117L132 134M139 150L160 148M126 174L133 186M100 175L95 190M85 160L69 171M308 138Q304 124 322 79Q323 93 330 78Q361 63 380 81Q408 132 401 161Q398 171 321 182Q311 181 308 138M317 106Q320 90 331 83M374 80Q393 122 386 168M327 121L335 126L327 130M355 113L350 119L360 121M339 144Q350 150 359 141Q363 154 349 159Q341 159 339 144M347 143L349 153M351 180L353 202Q362 211 370 199L368 175M332 204Q317 225 334 225Q346 218 332 204M392 202Q399 202 406 217Q402 228 391 224ZM426 209Q438 218 438 227Q427 235 424 221ZM418 127Q432 109 451 123Q477 118 497 115Q519 121 514 147Q509 164 494 169Q487 179 487 213Q483 228 467 222Q456 197 440 191Q411 187 415 172Q427 155 418 127M169 213Q166 202 178 198L278 169Q291 168 297 180L314 242Q316 253 300 263L305 293L279 280L205 297Q192 298 187 286ZM195 235A34 34 0 1 1 263 235A34 34 0 1 1 195 235M205 231L212 227L221 232M228 228A8 8 0 1 0 244 226A8 8 0 1 0 228 228M236 227H239M213 247Q229 250 251 237Q252 259 231 265Q222 265 213 247M222 249L224 257M236 245L237 263M274 258L281 263L288 246M282 262L289 262L297 244M46 287Q47 278 56 278L153 276Q164 277 164 290V356Q164 369 150 370L95 371L69 392V371H58Q46 370 46 356ZM0 282Q19 288 16 321Q14 344 0 350M578 55A31 31 0 1 1 640 55A31 31 0 1 1 578 55M594 38L626 45L612 54L621 69L613 74L604 61L597 70ZM570 93Q572 89 587 100Q583 109 571 101ZM628 108Q636 101 648 107Q639 116 628 108M253 367Q239 340 250 333Q275 337 287 357Q296 377 285 387Q265 393 260 378Q247 362 250 350Q232 342 245 379L253 427Q240 437 245 451Q265 463 302 460L308 437Q301 429 253 428M259 333Q266 328 289 334Q308 341 318 355M312 367Q319 352 315 317Q322 302 331 318L325 373L343 324Q350 314 355 323L336 376L365 347Q374 349 371 357L330 396L303 430M368 310Q353 263 360 262L380 270Q400 266 416 263Q437 243 443 244Q449 243 450 258L461 289Q462 303 439 318Q402 339 377 325ZM383 286A7 7 0 1 0 397 286A7 7 0 1 0 383 286M421 277A7 7 0 1 0 435 277A7 7 0 1 0 421 277M407 288Q416 286 413 292L410 295L410 301M401 301Q408 305 412 298Q418 303 423 297M391 287H393M429 278H431M401 333L405 344Q422 355 425 372L412 379Q416 389 441 385L444 372Q448 360 454 357L474 351M461 300Q503 297 499 270L490 253Q491 247 506 255Q517 285 503 308Q518 340 515 357Q513 377 491 369L490 359L481 359Q477 353 495 346L487 338L474 351L470 361L482 374L497 370M548 306Q548 299 555 298L630 293L626 307L628 347Q628 354 620 354L555 357Q548 356 548 343ZM566 317L607 312Q613 315 609 321L569 325ZM571 330L595 328Q600 332 595 336H571ZM683 302Q677 297 672 309Q653 303 646 314Q649 327 677 337M115 433Q116 417 134 418Q120 398 130 391L142 389Q147 390 150 381Q165 378 171 393Q169 411 154 424Q181 410 193 420Q199 431 189 435Q191 450 173 452Q156 440 151 427L116 466L149 429L158 452L155 464L151 466L146 453L147 437Q133 442 122 438M152 427L190 434M151 427L155 402M0 488L19 431Q28 419 38 429L59 484Q53 489 48 481L43 467L17 464L8 486ZM22 455L28 436L39 457ZM307 496Q302 489 330 436Q355 396 380 400Q400 401 413 413Q428 408 448 426Q490 428 496 440L497 474Q486 560 467 567Q446 559 437 541Q424 515 401 515L354 516Q330 523 307 496M362 431L373 428L374 418Q384 416 388 426L400 425Q409 435 398 443L396 454Q386 462 379 449L365 449Q356 441 362 431M370 478A13 13 0 1 0 396 478A13 13 0 1 0 370 478M422 496A13 13 0 1 0 448 496A13 13 0 1 0 422 496M415 463L422 445L430 444L422 468ZM575 449Q573 433 588 431Q605 431 606 445L607 478Q605 490 592 489Q580 488 577 477ZM569 462Q559 469 562 477Q574 504 606 499Q626 488 626 472Q625 462 619 464Q620 488 598 491Q578 493 569 473ZM561 479H571M597 500L604 531L609 527L602 501M658 462L682 445L674 471H684L667 504V485L653 484ZM126 542Q117 526 133 519L245 492Q263 487 267 501L272 532Q273 546 256 549L173 567M126 542L131 567M225 494Q235 483 244 492M94 493L116 507M88 517L109 520M89 536L107 534M0 548Q37 535 69 563L72 567M370 549Q351 525 377 517Q402 516 402 535Q400 555 379 556M359 533L389 533L379 544M334 558Q364 551 387 567M513 567Q526 537 542 530Q550 543 549 567`,
 bold:`M584 142Q587 115 602 110Q626 127 622 134L583 142Q568 158 578 160L637 144Q649 139 641 135Q629 133 610 143M573 160Q568 178 574 184Q579 191 656 167Q669 159 659 151L640 153M576 178L663 155M587 190L616 237Q623 246 636 243L654 238Q665 231 664 221L663 158M587 190Q590 199 605 186Q609 203 627 184Q638 190 644 175Q656 182 663 170`,
 text:`<text x="65" y="340" font-size="56" font-weight="bold" textLength="52" lengthAdjust="spacingAndGlyphs">Hi</text><text x="142" y="555" font-size="42" textLength="116" lengthAdjust="spacingAndGlyphs" transform="rotate(-12 142 555)">09:28</text>`}
];

const triples = s => (s || '').trim().split(/\s+/).filter(Boolean).map(Number)
  .reduce((a, n, i) => (i % 3 ? a[a.length - 1].push(n) : a.push([n]), a), []);
const starPath = (x, y, r) => 'M' + Array.from({length: 10}, (_, i) => {
  const q = i % 2 ? r * .52 : r, a = i * Math.PI / 5 - Math.PI / 2 + .12;
  return (x + q * Math.cos(a)).toFixed(1) + ' ' + (y + q * Math.sin(a)).toFixed(1);
}).join('L') + 'Z';
const sparkPath = (x, y, r) => {
  const k = r * .2;
  return `M${x} ${y-r}Q${x+k/2} ${y-k} ${x+k} ${y-k}Q${x+k*1.5} ${y-k/2} ${x+r} ${y}Q${x+k} ${y+k/2} ${x+k} ${y+k}Q${x+k/2} ${y+k} ${x} ${y+r}Q${x-k/2} ${y+k} ${x-k} ${y+k}Q${x-k} ${y+k/2} ${x-r} ${y}Q${x-k} ${y-k/2} ${x-k} ${y-k}Q${x-k/2} ${y-k} ${x} ${y-r}Z`;
};
const drawTile = t => `<g transform="translate(${t.at}) scale(.33333)">` +
  triples(t.dots).map(([x, y, r]) => `<circle cx="${x}" cy="${y}" r="${r}"/>`).join('') +
  `<path d="${triples(t.stars).map(v => starPath(...v)).join('')}${triples(t.sparks).map(v => sparkPath(...v)).join('')}"/>` +
  `<path d="${t.paths}"/>` + (t.bold ? `<path class="bold" d="${t.bold}"/>` : '') + (t.text || '') + '</g>';

define('doodle-wallpaper', `<style>
:host{display:block;overflow:hidden;background:#e4dcd6}
svg{display:block;width:472px;height:656px;fill:none;stroke:#dad1cb;stroke-width:3.6;stroke-linecap:round;stroke-linejoin:round;font-family:"Liberation Sans",sans-serif}
.bold{stroke:#d4cbc5;stroke-width:4.2}
text{stroke-width:2.8}
</style><svg viewBox="-4 53 472 656">${tiles.map(drawTile).join('')}</svg>`);

define('chat-preview', `<style>
:host{display:grid;box-sizing:border-box;width:472px;height:702px;margin:7px 0 0 -4px;grid-template-rows:46px 656px;border-radius:14px;overflow:hidden;background:#e4dcd6}
doodle-wallpaper,main{grid-area:2/1}
main{display:flex;z-index:1;padding:18px 0 0 18px;align-items:flex-start}
</style><slot name="header"></slot><doodle-wallpaper></doodle-wallpaper><main><slot></slot></main>`);
</script>
</body>
</html>
